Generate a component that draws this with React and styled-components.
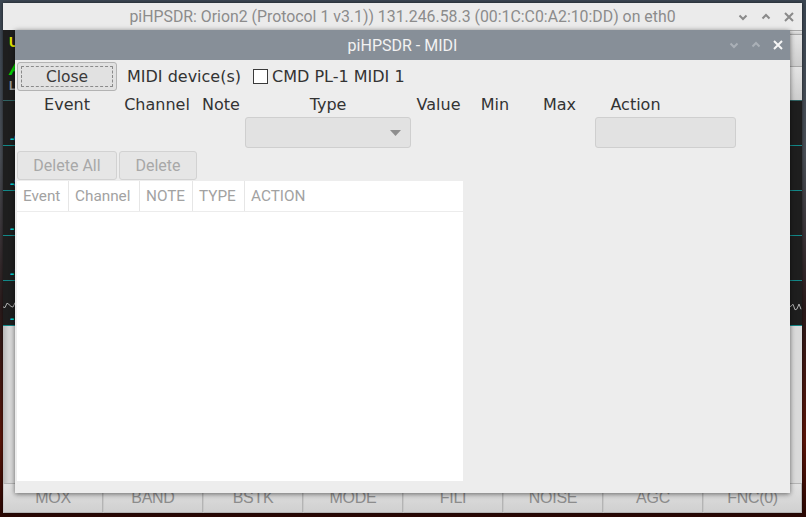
import React from "react";
import styled, { createGlobalStyle } from "styled-components";

const GlobalStyle = createGlobalStyle`
  html, body {
    margin: 0;
    padding: 0;
    width: 806px;
    height: 517px;
    overflow: hidden;
  }
  body {
    font-family: "DejaVu Sans", sans-serif;
  }
`;

const Desktop = styled.div`
  position: relative;
  width: 806px;
  height: 517px;
  overflow: hidden;
  background: linear-gradient(
    to bottom,
    #3b4652 0%,
    #4a4f56 30%,
    #2a1a1a 60%,
    #5a1408 85%,
    #2a0804 100%
  );
`;

// ---------- main radio window ----------

const MainWindow = styled.div`
  position: absolute;
  left: 3px;
  top: 3px;
  width: 799px;
  height: 510px;
  display: flex;
  flex-direction: column;
  background: #1e1e1e;
  box-shadow: 0 0 3px rgba(0, 0, 0, 0.6);
`;

const TitleBar = styled.div`
  position: relative;
  height: ${(p) => (p.$dialog ? 30 : 27)}px;
  flex: none;
  display: flex;
  align-items: center;
  justify-content: center;
  background: ${(p) => (p.$dialog ? "#878f98" : "#ebebeb")};
  color: ${(p) => (p.$dialog ? "#f2f2f2" : "#8c8c8c")};
  font-family: Roboto, "Noto Sans", sans-serif;
  font-size: ${(p) => (p.$dialog ? 16 : 15.85)}px;
  white-space: nowrap;
`;

const Controls = styled.div`
  position: absolute;
  right: ${(p) => p.$right}px;
  top: 0;
  bottom: 0;
  display: flex;
  align-items: center;
  gap: ${(p) => p.$gap}px;
`;

const Ctl = styled.svg`
  width: 10px;
  height: 10px;
  stroke: ${(p) => p.$color};
  stroke-width: 2;
  fill: none;
`;

const Content = styled.div`
  flex: 1;
  display: flex;
  flex-direction: column;
  background: #1e1e1e;
`;

const InfoBar = styled.div`
  height: 70px;
  flex: none;
  display: flex;
  justify-content: space-between;
  border-bottom: 1px solid #2f6262;
`;

const InfoLeft = styled.div`
  display: flex;
  flex-direction: column;
  padding: 5px 0 0 6px;
  font-family: "Liberation Sans", sans-serif;
  font-weight: bold;
  line-height: 1;
`;

const InfoText = styled.span`
  color: ${(p) => p.$color};
  font-size: ${(p) => p.$size}px;
  font-style: ${(p) => (p.$italic ? "italic" : "normal")};
  margin-bottom: ${(p) => p.$mb || 0}px;
`;

const RightPanel = styled.div`
  width: 40px;
  display: flex;
  flex-direction: column;
  background: #d8d8d8;
  border-left: 1px solid #aaa;
`;

const PanelCell = styled.div`
  height: ${(p) => p.$h}px;
  border-top: 1px solid #a8a8a8;
  background: linear-gradient(to bottom, #e4e4e4, #cdcdcd);
`;

const Panadapter = styled.div`
  position: relative;
  display: flex;
  flex-direction: column;
`;

const GridRow = styled.div`
  height: 44px;
  border-bottom: 1px solid #128888;
  display: flex;
  align-items: flex-end;
  padding-left: 7px;
`;

const DbLabel = styled.span`
  color: #00d0d0;
  font-family: "DejaVu Sans", sans-serif;
  font-size: 11px;
  font-weight: bold;
  letter-spacing: -0.5px;
  line-height: 1;
  margin-bottom: 1px;
`;

const Wave = styled.svg`
  position: absolute;
  left: 0;
  top: 190px;
  width: 799px;
  height: 30px;
`;

const LowerPanel = styled.div`
  flex: 1;
  background: linear-gradient(to right, #b8b8b8 0px, #d9d9d9 6px, #dadada 100%);
`;

const ButtonBar = styled.div`
  height: 30px;
  flex: none;
  display: flex;
  background: #d6d6d6;
`;

const BarButton = styled.div`
  width: ${(p) => p.$w}px;
  box-sizing: border-box;
  display: flex;
  align-items: center;
  justify-content: center;
  border: 1px solid #b4b4b4;
  border-left-color: #c8c8c8;
  background: linear-gradient(to bottom, #e2e2e2, #d0d0d0);
  color: #8c8c8c;
  font-family: "Liberation Sans", sans-serif;
  font-size: 16px;
  letter-spacing: -0.3px;
`;

// ---------- MIDI dialog ----------

const Dialog = styled.div`
  position: absolute;
  left: 15px;
  top: 30px;
  width: 775px;
  height: 463px;
  display: flex;
  flex-direction: column;
  box-shadow: 0 1px 5px rgba(0, 0, 0, 0.55);
`;

const Body = styled.div`
  flex: 1;
  background: #ededed;
  padding: 2px 0 12px 2px;
  display: flex;
  flex-direction: column;
  color: #333333;
  font-family: "DejaVu Sans", sans-serif;
  font-size: 16px;
`;

const TopRow = styled.div`
  height: 29px;
  display: flex;
  align-items: center;
  margin-bottom: 1px;
`;

const Button = styled.div`
  box-sizing: border-box;
  width: ${(p) => p.$w}px;
  height: 29px;
  display: flex;
  align-items: center;
  justify-content: center;
  border-radius: 3px;
  border: 1px solid ${(p) => (p.$disabled ? "#d2d2d2" : "#b3b3b3")};
  background: ${(p) => (p.$disabled ? "#e6e6e6" : "#e1e1e1")};
  color: ${(p) => (p.$disabled ? "#a8a8a8" : "#3a3a3a")};
  font-family: ${(p) =>
    p.$disabled ? 'Roboto, "Noto Sans", sans-serif' : '"DejaVu Sans", sans-serif'};
  font-size: ${(p) => (p.$disabled ? 16 : 15.5)}px;
  position: relative;
  margin-left: ${(p) => p.$ml || 0}px;
  align-self: end;
`;

const FocusRing = styled.div`
  position: absolute;
  inset: 3px;
  border: 1px dashed #8a8a8a;
  border-radius: 1px;
`;

const DeviceLabel = styled.span`
  margin-left: 10px;
`;

const Check = styled.div`
  box-sizing: border-box;
  width: 15px;
  height: 15px;
  margin-left: 12px;
  margin-right: 4px;
  background: #ffffff;
  border: 1px solid #3a3a3a;
`;

const Grid = styled.div`
  display: grid;
  grid-template-columns: 100px 80px 48px 166px 55px 58px 71px 81px 60px;
  grid-template-rows: 25px 31px 32px;
  margin-bottom: 1px;
`;

const Head = styled.div`
  display: flex;
  align-items: center;
  justify-content: center;
  white-space: nowrap;
`;

const Field = styled.div`
  box-sizing: border-box;
  grid-column: ${(p) => p.$col};
  height: 31px;
  border: 1px solid #cfcfcf;
  border-radius: 3px;
  background: #e2e2e2;
  display: flex;
  align-items: center;
  justify-content: flex-end;
  padding-right: 9px;
`;

const Table = styled.div`
  width: 446px;
  height: 300px;
  background: #ffffff;
  display: flex;
  flex-direction: column;
`;

const TableHead = styled.div`
  height: 30px;
  display: flex;
  border-bottom: 1px solid #ececec;
  font-family: Roboto, "Noto Sans", sans-serif;
  font-size: 15.3px;
  color: #a2a2a2;
`;

const HeadCell = styled.div`
  box-sizing: border-box;
  width: ${(p) => (p.$w ? `${p.$w}px` : "auto")};
  flex: ${(p) => (p.$w ? "none" : 1)};
  display: flex;
  align-items: center;
  padding-left: 6px;
  border-left: ${(p) => (p.$first ? "none" : "1px solid #e6e6e6")};
`;

function ChevronDown({ color }) {
  return (
    <Ctl $color={color} viewBox="0 0 10 10">
      <path d="M1.5 3.5 L5 7 L8.5 3.5" />
    </Ctl>
  );
}

function ChevronUp({ color }) {
  return (
    <Ctl $color={color} viewBox="0 0 10 10">
      <path d="M1.5 6.5 L5 3 L8.5 6.5" />
    </Ctl>
  );
}

function Cross({ color }) {
  return (
    <Ctl $color={color} viewBox="0 0 10 10">
      <path d="M1 1 L9 9 M9 1 L1 9" />
    </Ctl>
  );
}

function wavePoints() {
  let pts = [];
  let seed = 7;
  for (let x = 0; x <= 799; x += 2) {
    seed = (seed * 9301 + 49297) % 233280;
    const r = seed / 233280;
    pts.push(`${x},${16 + (r - 0.5) * 10}`);
  }
  return pts.join(" ");
}

const bottomButtons = ["MOX", "BAND", "BSTK", "MODE", "FILI", "NOISE", "AGC", "FNC(0)"];
const dbLabels = ["-60", "-80", "-100", "-120", "-140"];
const heads = ["Event", "Channel", "Note", "Type", "Value", "Min", "Max", "Action"];

export default function App() {
  return (
    <Desktop>
      <GlobalStyle />
      <MainWindow>
        <TitleBar>
          piHPSDR: Orion2 (Protocol 1 v3.1)) 131.246.58.3 (00:1C:C0:A2:10:DD) on eth0
          <Controls $right={8} $gap={13}>
            <ChevronDown color="#8a8a8a" />
            <ChevronUp color="#8a8a8a" />
            <Cross color="#8a8a8a" />
          </Controls>
        </TitleBar>
        <Content>
          <InfoBar>
            <InfoLeft>
              <InfoText $color="#e6e600" $size={14} $mb={9}>U</InfoText>
              <InfoText $color="#00d000" $size={20} $italic $mb={2}>A</InfoText>
              <InfoText $color="#9a9a9a" $size={12}>L</InfoText>
            </InfoLeft>
            <RightPanel>
              <PanelCell $h={3} />
              <PanelCell $h={31} />
              <PanelCell $h={34} />
            </RightPanel>
          </InfoBar>
          <Panadapter>
            {dbLabels.map((l) => (
              <GridRow key={l}>
                <DbLabel>{l}</DbLabel>
              </GridRow>
            ))}
            <Wave viewBox="0 0 799 30">
              <polyline points={wavePoints()} fill="none" stroke="#b0b0b0" strokeWidth="1" />
            </Wave>
          </Panadapter>
          <LowerPanel />
          <ButtonBar>
            {bottomButtons.map((b, i) => (
              <BarButton key={b} $w={i === 7 ? 99 : 100}>
                {b}
              </BarButton>
            ))}
          </ButtonBar>
        </Content>
      </MainWindow>

      <Dialog>
        <TitleBar $dialog>
          piHPSDR - MIDI
          <Controls $right={7} $gap={12}>
            <ChevronDown color="#aab0b7" />
            <ChevronUp color="#aab0b7" />
            <Cross color="#f6f6f6" />
          </Controls>
        </TitleBar>
        <Body>
          <TopRow>
            <Button $w={100}>
              <FocusRing />
              Close
            </Button>
            <DeviceLabel>MIDI device(s)</DeviceLabel>
            <Check />
            <span>CMD PL-1 MIDI 1</span>
          </TopRow>
          <Grid>
            {heads.map((h) => (
              <Head key={h}>{h}</Head>
            ))}
            <Head />
            <Field $col="4">
              <svg width="11" height="6" viewBox="0 0 11 6">
                <polygon points="0,0 11,0 5.5,6" fill="#8e8e8e" />
              </svg>
            </Field>
            <Field $col="8 / span 2" />
            <Button $w={100} $disabled style={{ gridColumn: 1, gridRow: 3 }}>
              Delete All
            </Button>
            <Button $w={78} $ml={2} $disabled style={{ gridColumn: 2, gridRow: 3 }}>
              Delete
            </Button>
          </Grid>
          <Table>
            <TableHead>
              <HeadCell $w={51} $first>Event</HeadCell>
              <HeadCell $w={71}>Channel</HeadCell>
              <HeadCell $w={53}>NOTE</HeadCell>
              <HeadCell $w={52}>TYPE</HeadCell>
              <HeadCell>ACTION</HeadCell>
            </TableHead>
          </Table>
        </Body>
      </Dialog>
    </Desktop>
  );
}
